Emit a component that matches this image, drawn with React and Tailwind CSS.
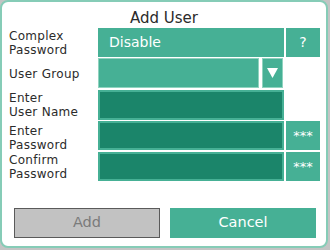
import React from "react";

const font = { fontFamily: '"DejaVu Sans", sans-serif' };

function Label({ lines, pt }) {
  return (
    <div className={`w-[89px] text-[12px] leading-[14px] tracking-[0.3px] text-[#2b2b2b] ${pt}`}>
      {lines.map((l) => (
        <div key={l}>{l}</div>
      ))}
    </div>
  );
}

function TextField() {
  return <div className="h-full w-[186px] border-2 border-[#46b095] bg-[#1b856a]" />;
}

function StarBtn() {
  return (
    <div className="ml-[2px] flex h-full w-[34px] items-center justify-center bg-[#46b095] text-[13px] text-white">
      ***
    </div>
  );
}

export default function App() {
  return (
    <div className="h-[250px] w-[330px] bg-[#c4c4c4]" style={font}>
      <div className="flex h-[248px] w-[328px] flex-col rounded-[8px] border-2 border-[#86ccb7] bg-white pl-[7px]">
        <div className="pr-[7px] pt-[8px] text-center text-[15px] leading-[17px] text-[#2b2b2b]">
          Add User
        </div>
        {/* Complex password */}
        <div className="mt-[1px] flex h-[29px]">
          <Label lines={["Complex", "Password"]} pt="pt-[1px]" />
          <div className="flex h-full w-[186px] items-center bg-[#46b095] pl-[11px] text-[14px] text-white">
            Disable
          </div>
          <div className="ml-[2px] flex h-full w-[34px] items-center justify-center bg-[#46b095] text-[14px] text-white">
            ?
          </div>
        </div>
        {/* User group */}
        <div className="mt-[1px] flex h-[30px]">
          <Label lines={["User Group"]} pt="pt-[9px]" />
          <div className="h-full w-[161px] border border-[#8fd3bf] bg-[#46b095]" />
          <div className="ml-[3px] flex h-full w-[21px] items-center justify-center border border-[#8fd3bf] bg-[#46b095]">
            <svg width="11" height="10" viewBox="0 0 11 10">
              <polygon points="0,0 11,0 5.5,10" fill="#ffffff" />
            </svg>
          </div>
        </div>
        {/* User name */}
        <div className="mt-[2px] flex h-[30px]">
          <Label lines={["Enter", "User Name"]} pt="pt-[1px]" />
          <TextField />
        </div>
        {/* Password */}
        <div className="mt-[1px] flex h-[29px]">
          <Label lines={["Enter", "Password"]} pt="pt-[3px]" />
          <TextField />
          <StarBtn />
        </div>
        {/* Confirm */}
        <div className="mt-[2px] flex h-[29px]">
          <Label lines={["Confirm", "Password"]} pt="pt-[1px]" />
          <TextField />
          <StarBtn />
        </div>
        {/* Buttons */}
        <div className="ml-[5px] mt-[27px] flex h-[30px] gap-[10px]">
          <div className="flex h-full w-[146px] items-center justify-center border border-[#5a5a5a] bg-[#c2c2c2] text-[14.5px] text-[#7b7b7b]">
            Add
          </div>
          <div className="flex h-full w-[146px] items-center justify-center bg-[#46b095] text-[14.5px] text-white">
            Cancel
          </div>
        </div>
      </div>
    </div>
  );
}
